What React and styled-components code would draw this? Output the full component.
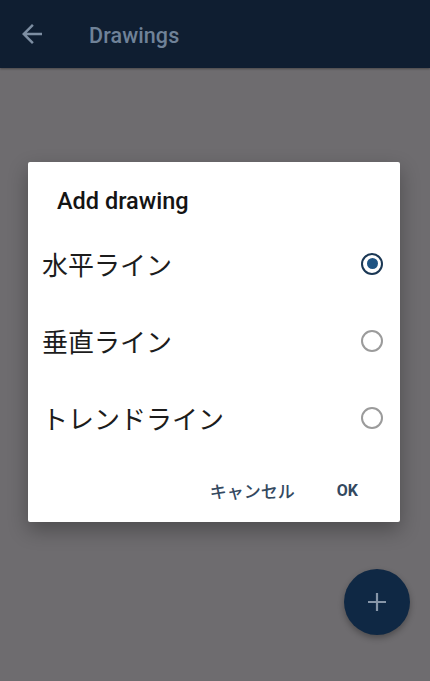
import React, { useState } from "react";
import styled, { createGlobalStyle } from "styled-components";

const Global = createGlobalStyle`
  html, body { margin: 0; padding: 0; }
  body {
    width: 430px;
    height: 681px;
    overflow: hidden;
    background: #6e6c6f;
    font-family: Roboto, "Noto Sans CJK JP", "Noto Sans", sans-serif;
  }
`;

const Screen = styled.div`
  position: relative;
  width: 430px;
  height: 681px;
  background: #6e6c6f;
  display: flex;
  flex-direction: column;
`;

const AppBar = styled.header`
  height: 68px;
  flex: none;
  background: #0f1e31;
  display: flex;
  align-items: center;
  box-shadow: 0 1px 2px rgba(0, 0, 0, 0.35);
`;

const BackButton = styled.div`
  width: 30px;
  height: 30px;
  margin-left: 17px;
  color: #7d8ea2;
  display: flex;
`;

const AppTitle = styled.h1`
  margin: 3px 0 0 42px;
  font-size: 21.5px;
  font-weight: 500;
  color: #6f8298;
  letter-spacing: 0.1px;
`;

const Dialog = styled.div`
  position: absolute;
  left: 28px;
  top: 162px;
  width: 372px;
  height: 360px;
  box-sizing: border-box;
  background: #ffffff;
  border-radius: 2px;
  box-shadow: 0 8px 20px rgba(0, 0, 0, 0.3);
  display: flex;
  flex-direction: column;
  padding: 25px 0 8px;
`;

const DialogTitle = styled.h2`
  margin: 0;
  padding-left: 29px;
  height: 28px;
  line-height: 28px;
  font-size: 23.5px;
  font-weight: 500;
  color: #141414;
`;

const Options = styled.div`
  margin-top: 10px;
  display: flex;
  flex-direction: column;
`;

const Option = styled.label`
  height: 77px;
  display: flex;
  align-items: center;
  justify-content: space-between;
  padding: 0 17px 0 14px;
  cursor: pointer;
`;

const OptionText = styled.span`
  font-family: "Noto Sans CJK JP", sans-serif;
  font-size: 26px;
  font-weight: 400;
  color: #1c1c1c;
  line-height: 1.2;
`;

const Radio = styled.span`
  width: 22px;
  height: 22px;
  box-sizing: border-box;
  border-radius: 50%;
  border: 2.5px solid ${(p) => (p.$checked ? "#1a3754" : "#9b9b9b")};
  display: flex;
  align-items: center;
  justify-content: center;
  &::after {
    content: "";
    width: 11px;
    height: 11px;
    border-radius: 50%;
    background: #1f5483;
    display: ${(p) => (p.$checked ? "block" : "none")};
  }
`;

const Actions = styled.div`
  margin-top: auto;
  height: 48px;
  display: flex;
  align-items: center;
  justify-content: flex-end;
  gap: 18px;
  padding-right: 30px;
`;

const ActionButton = styled.button`
  border: none;
  background: transparent;
  padding: 0 12px;
  height: 40px;
  font-family: Roboto, "Noto Sans CJK JP", sans-serif;
  font-size: ${(p) => (p.$latin ? "16px" : "17px")};
  font-weight: ${(p) => (p.$latin ? 700 : 500)};
  color: #34495f;
  cursor: pointer;
`;

const Fab = styled.button`
  position: absolute;
  right: 20px;
  bottom: 46px;
  width: 66px;
  height: 66px;
  border-radius: 50%;
  border: none;
  background: #0f2844;
  box-shadow: 0 3px 6px rgba(0, 0, 0, 0.3);
  display: flex;
  align-items: center;
  justify-content: center;
  color: #8796a8;
  padding: 0;
`;

const options = ["水平ライン", "垂直ライン", "トレンドライン"];

export default function App() {
  const [selected, setSelected] = useState(0);
  return (
    <>
      <Global />
      <Screen>
        <AppBar>
          <BackButton>
            <svg width="30" height="30" viewBox="0 0 24 24" fill="currentColor">
              <path d="M20 11H7.83l5.59-5.59L12 4l-8 8 8 8 1.41-1.41L7.83 13H20v-2z" />
            </svg>
          </BackButton>
          <AppTitle>Drawings</AppTitle>
        </AppBar>
        <Fab>
          <svg width="22" height="22" viewBox="0 0 22 22">
            <path d="M11 2v18M2 11h18" stroke="currentColor" strokeWidth="2.2" />
          </svg>
        </Fab>
        <Dialog>
          <DialogTitle>Add drawing</DialogTitle>
          <Options>
            {options.map((o, i) => (
              <Option key={o} onClick={() => setSelected(i)}>
                <OptionText>{o}</OptionText>
                <Radio $checked={selected === i} />
              </Option>
            ))}
          </Options>
          <Actions>
            <ActionButton>キャンセル</ActionButton>
            <ActionButton $latin>OK</ActionButton>
          </Actions>
        </Dialog>
      </Screen>
    </>
  );
}
